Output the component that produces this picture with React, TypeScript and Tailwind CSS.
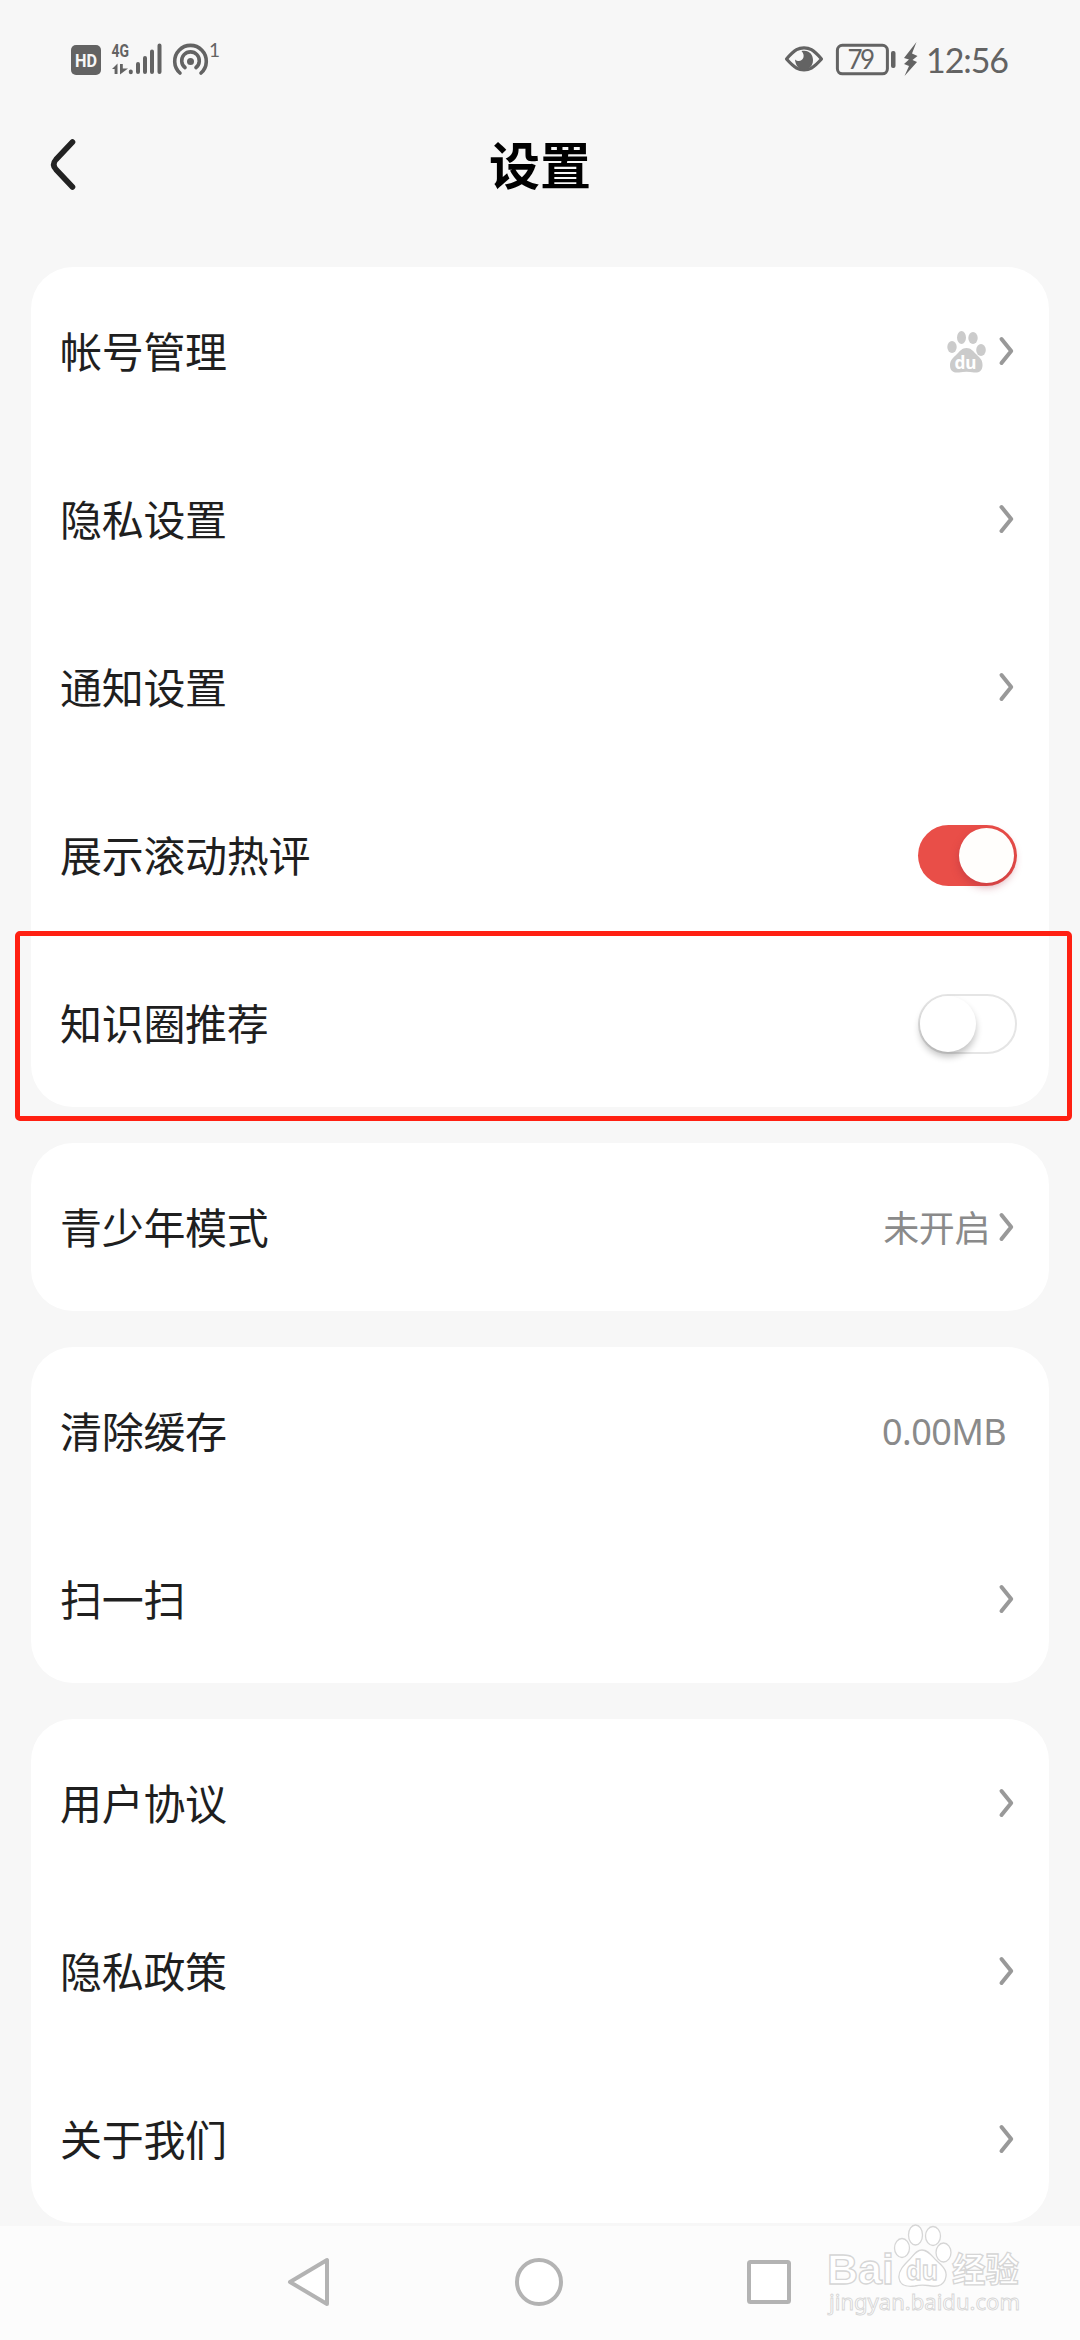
import type { ReactNode } from "react";

interface RowProps {
    label: string;
    children?: ReactNode;
}

function Row({ label, children }: RowProps) {
    return (
        <div className="flex h-[168px] items-center justify-between pl-[29px] pr-8">
            <span className="mb-0.5 text-[42px] leading-none tracking-[-0.3px] text-[#1f1f1f]">{label}</span>
            <div className="flex items-center">{children}</div>
        </div>
    );
}

function Card({ children, className = "" }: { children: ReactNode; className?: string }) {
    return <section className={`mx-[31px] rounded-[42px] bg-white ${className}`}>{children}</section>;
}

function Chevron() {
    return (
        <svg className="mr-[3px] h-[30px] w-4" viewBox="0 0 16 30" fill="none" stroke="#999999" strokeWidth="4" strokeLinecap="round" strokeLinejoin="round">
            <path d="M3.500 3L13.200 15L3.500 27" />
        </svg>
    );
}

function Paw() {
    return (
        <svg className="mr-3 h-[44px] w-10" viewBox="0 0 40 44">
            <g fill="#cbcbcb">
                <ellipse cx="6" cy="18" rx="4.7" ry="6" />
                <ellipse cx="15.5" cy="8.5" rx="4.5" ry="6.5" />
                <ellipse cx="27" cy="9" rx="4.7" ry="6" />
                <ellipse cx="35" cy="21" rx="4.8" ry="6" />
                <path d="M20.500 19C25 19 27 22 30 25C34 29 37 31 36.500 37C36 42 33 44 28 43.500C23 42.500 18 42.500 13 43.500C7 44 4 42 4 36C4 31 8 28 11 25C14 22 16 19 20.500 19Z" />
            </g>
            <text x="19.500" y="40" textAnchor="middle" textLength="22" lengthAdjust="spacingAndGlyphs" fill="#ffffff" className="font-['Noto_Sans',sans-serif] text-[18px] font-bold">du</text>
        </svg>
    );
}

function Toggle({ on = false }: { on?: boolean }) {
    return on ? (
        <div className="flex h-[61px] w-[99px] items-center justify-end rounded-full bg-[#e94e48] pr-[3px]">
            <div className="h-[55px] w-[55px] rounded-full bg-[#fffefc] shadow-[0_4px_8px_rgba(160,40,60,0.4)]" />
        </div>
    ) : (
        <div className="mt-0.5 flex h-[60px] w-[99px] items-center rounded-full border-2 border-[#e5e5e5] bg-white">
            <div className="h-[56px] w-[56px] rounded-full bg-white shadow-[0_5px_7px_rgba(0,0,0,0.24)]" />
        </div>
    );
}

function StatusBar() {
    return (
        <header className="flex h-[110px] items-start justify-between pl-[70px] pr-[70px] pt-[30px] text-[#636363]">
            <svg className="h-[50px] w-[150px]" viewBox="70 30 150 50" fill="currentColor">
                <rect x="71" y="45" width="30" height="30" rx="5" />
                <text x="86" y="67.300" textAnchor="middle" textLength="22" lengthAdjust="spacingAndGlyphs" fill="#f7f7f7" className="font-['Roboto',sans-serif] text-[18.500px] font-bold">HD</text>
                <text x="111.500" y="56.700" textLength="17.500" lengthAdjust="spacingAndGlyphs" className="font-['Roboto',sans-serif] text-[18.500px] font-bold">4G</text>
                {/* Data arrows */}
                <path d="M112 69L117.500 63.500V74H114.600V69ZM120 64H122.800V68.500H128L120 74.500Z" />
                <g stroke="currentColor" strokeWidth="4" strokeLinecap="round">
                    <path d="M130.800 71.500V72.300M138 64V72M145 58V72M152 51.500V72M159.500 45.500V72" />
                </g>
                <g fill="none" stroke="currentColor" strokeWidth="3.600" strokeLinecap="round">
                    <path d="M180 73A15.800 15.800 0 1 1 201 73" />
                    <path d="M185 67.500A8.800 8.800 0 1 1 196 67.500" />
                </g>
                <circle cx="190.500" cy="61.500" r="3.500" />
                <text x="209" y="57" className="font-['Lato',sans-serif] text-[19px]">1</text>
            </svg>
            <div className="flex h-[50px] items-center">
                <svg className="h-[50px] w-[136px]" viewBox="784 30 136 50" fill="currentColor">
                    <path d="M786.500 59C795 49 799 47.800 804 47.800S813 49 821.500 59C813 68.500 809 70 804 70S795 68.500 786.500 59Z" fill="none" stroke="currentColor" strokeWidth="3.200" strokeLinejoin="round" />
                    <path d="M801.500 51C809 49.500 813 54.500 813 60C813 66 809 69.500 804 69.500C799 69.500 795.500 66 795 59.500C801 64.500 807 56.500 801.500 51Z" />
                    <rect x="837.400" y="45.300" width="50" height="28.500" rx="5" fill="none" stroke="currentColor" strokeWidth="3" />
                    <rect x="891" y="51" width="4.500" height="17" rx="2" />
                    <text x="847.500" y="68.800" textLength="27.500" className="font-['Lato',sans-serif] text-[26px]">79</text>
                    <path d="M916.500 42L904 58L909 59.500L904 64L909 66L904.500 76L917 62L912.500 60L917.500 56L912 53.500Z" />
                </svg>
                <svg className="h-[50px] w-[90px]" viewBox="920 30 90 50" fill="currentColor">
                    <text x="926" y="72.500" textLength="83" className="font-['Lato',sans-serif] text-[34px]">12:56</text>
                </svg>
            </div>
        </header>
    );
}

function TitleBar() {
    return (
        <div className="grid h-[157px] grid-cols-3 items-start px-[46px] pt-[27px]">
            <svg className="h-[56px] w-9" viewBox="0 0 36 56" fill="none" stroke="#222222" strokeWidth="5.600" strokeLinecap="round" strokeLinejoin="round">
                <path d="M26.500 5L10 22.500Q5.500 27.500 10 32.500L26.500 50" />
            </svg>
            <h1 className="mt-px text-center text-[51px] font-bold leading-none text-black">设置</h1>
        </div>
    );
}

function Watermark() {
    return (
        <svg className="absolute bottom-[14px] right-[52px] h-[104px] w-[208px]" viewBox="820 2222 208 104" fill="#ffffff" stroke="#d6d6d6" strokeWidth="1.300">
            <text x="827" y="2284" textLength="67" lengthAdjust="spacingAndGlyphs" className="font-['Liberation_Sans',sans-serif] text-[43px] font-bold">Bai</text>
            <ellipse cx="902" cy="2248" rx="7.500" ry="9.500" />
            <ellipse cx="915.500" cy="2235" rx="7" ry="10" />
            <ellipse cx="933" cy="2236" rx="7.500" ry="9.500" />
            <ellipse cx="943.500" cy="2252.500" rx="7.500" ry="9.500" />
            <path d="M922 2250C929 2250 932 2257 938 2262C945 2268 948 2273 945 2280C942 2287 935 2287 928 2285.500C924 2285 919 2285 915 2286C907 2287 900 2286 899 2278C898 2271 904 2265 909 2260C914 2255 916 2250 922 2250Z" />
            <text x="906" y="2280" textLength="32" lengthAdjust="spacingAndGlyphs" className="font-['Noto_Sans',sans-serif] text-[26px] font-bold">du</text>
            <text x="952" y="2282" textLength="67" lengthAdjust="spacingAndGlyphs" className="text-[34px] font-bold">经验</text>
            <text x="829" y="2310" textLength="191" lengthAdjust="spacingAndGlyphs" strokeWidth="0.900" className="font-['Noto_Sans',sans-serif] text-[22px]">jingyan.baidu.com</text>
        </svg>
    );
}

function NavBar() {
    return (
        <nav className="relative mt-auto flex h-[114px] items-start justify-between bg-[#fcfcfc] pl-[284px] pr-[286px] pt-[28px] text-[#b3b3b3]">
            <svg className="h-14 w-12" viewBox="0 0 48 56" fill="#ffffff" stroke="currentColor" strokeWidth="4" strokeLinejoin="round">
                <path d="M6 28L43 6V50Z" />
            </svg>
            <svg className="h-14 w-14" viewBox="0 0 56 56" fill="#ffffff" stroke="currentColor" strokeWidth="4">
                <circle cx="28" cy="28" r="22" />
            </svg>
            <svg className="h-14 w-12" viewBox="0 0 48 56" fill="#ffffff" stroke="currentColor" strokeWidth="4">
                <rect x="3" y="8" width="40" height="40" rx="1.500" />
            </svg>
            <Watermark />
        </nav>
    );
}

export default function App() {
    return (
        <main className="relative flex h-[2340px] w-[1080px] flex-col overflow-hidden bg-[#f7f7f7] font-['Noto_Sans_CJK_SC',sans-serif]">
            <StatusBar />
            <TitleBar />

            <Card>
                <Row label="帐号管理">
                    <Paw />
                    <Chevron />
                </Row>
                <Row label="隐私设置"><Chevron /></Row>
                <Row label="通知设置"><Chevron /></Row>
                <Row label="展示滚动热评"><Toggle on /></Row>
                <Row label="知识圈推荐"><Toggle /></Row>
            </Card>

            <Card className="mt-9">
                <Row label="青少年模式">
                    <span className="mb-0.5 mr-2 text-[36px] leading-none tracking-[-0.4px] text-[#8a8a8a]">未开启</span>
                    <Chevron />
                </Row>
            </Card>

            <Card className="mt-9">
                <Row label="清除缓存">
                    <span className="mr-[11px] mt-0.5 font-['Noto_Sans',sans-serif] text-[36px] leading-none tracking-[-0.6px] text-[#8a8a8a]">0.00MB</span>
                </Row>
                <Row label="扫一扫"><Chevron /></Row>
            </Card>

            <Card className="mt-9">
                <Row label="用户协议"><Chevron /></Row>
                <Row label="隐私政策"><Chevron /></Row>
                <Row label="关于我们"><Chevron /></Row>
            </Card>

            <NavBar />

            {/* Highlight around the recommendation row */}
            <div className="pointer-events-none absolute left-[15px] top-[931px] h-[190px] w-[1057px] rounded-[5px] border-[5px] border-[#ff2012]" />
        </main>
    );
}
